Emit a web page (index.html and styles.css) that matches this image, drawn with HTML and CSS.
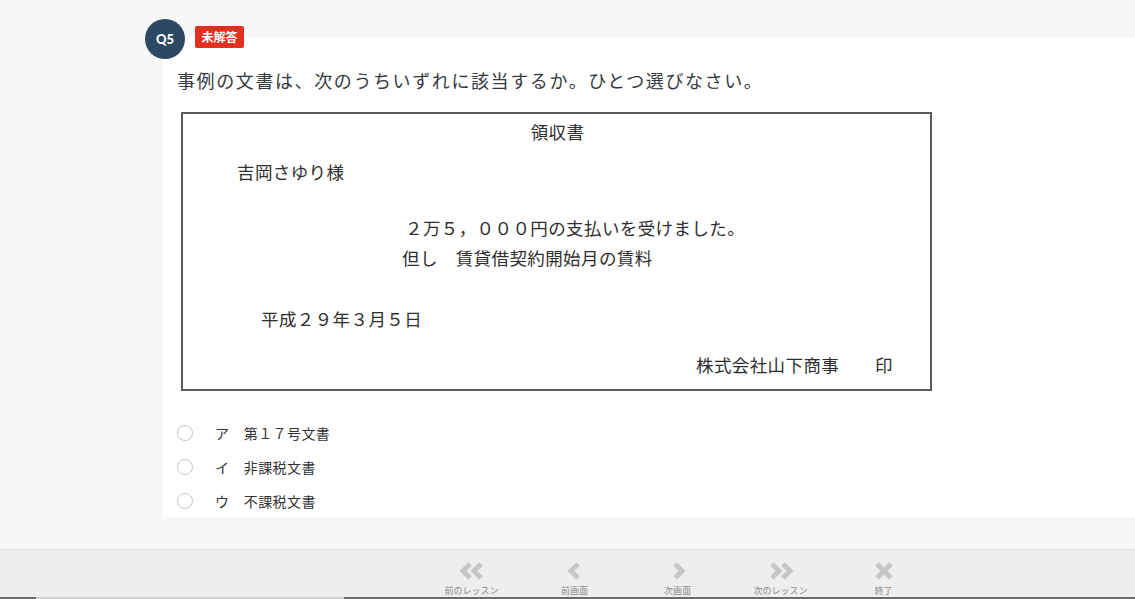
FILE: index.html
```html
<!DOCTYPE html>
<html lang="ja">
<head>
<meta charset="utf-8">
<title>Q5</title>
<link rel="stylesheet" href="styles.css">
</head>
<body>
<div class="main">
  <div class="question">
    <div class="q-head">
      <div class="q-num">Q5</div>
      <div class="q-badge">未解答</div>
    </div>
    <div class="card">
      <p class="q-text">事例の文書は、次のうちいずれに該当するか。ひとつ選びなさい。</p>
      <div class="doc">
        <div class="doc-title">領収書</div>
        <div class="doc-to">吉岡さゆり様</div>
        <div class="doc-amount">２万５，０００円の支払いを受けました。</div>
        <div class="doc-note">但し　賃貸借契約開始月の賃料</div>
        <div class="doc-date">平成２９年３月５日</div>
        <div class="doc-from">株式会社山下商事　　印</div>
      </div>
      <ul class="options">
        <li class="option"><span class="radio"></span><span class="opt-text">ア　第１７号文書</span></li>
        <li class="option"><span class="radio"></span><span class="opt-text">イ　非課税文書</span></li>
        <li class="option"><span class="radio"></span><span class="opt-text">ウ　不課税文書</span></li>
      </ul>
    </div>
  </div>
</div>
<div class="footer">
  <nav class="nav">
    <div class="nav-item">
      <svg class="ico" width="28" height="18" viewBox="0 0 28 18"><polyline points="12,2 5,9 12,16" /><polyline points="23,2 16,9 23,16" /></svg>
      <span class="nav-label">前のレッスン</span>
    </div>
    <div class="nav-item">
      <svg class="ico" width="28" height="18" viewBox="0 0 28 18"><polyline points="17,2 10,9 17,16" /></svg>
      <span class="nav-label">前画面</span>
    </div>
    <div class="nav-item">
      <svg class="ico" width="28" height="18" viewBox="0 0 28 18"><polyline points="11,2 18,9 11,16" /></svg>
      <span class="nav-label">次画面</span>
    </div>
    <div class="nav-item">
      <svg class="ico" width="28" height="18" viewBox="0 0 28 18"><polyline points="5,2 12,9 5,16" /><polyline points="16,2 23,9 16,16" /></svg>
      <span class="nav-label">次のレッスン</span>
    </div>
    <div class="nav-item">
      <svg class="ico" width="28" height="18" viewBox="0 0 28 18"><line x1="7" y1="2" x2="21" y2="16" /><line x1="21" y1="2" x2="7" y2="16" /></svg>
      <span class="nav-label">終了</span>
    </div>
  </nav>
  <div class="bottom-bar">
    <span class="seg seg-dark-a"></span>
    <span class="seg seg-light"></span>
    <span class="seg seg-dark-b"></span>
  </div>
</div>
</body>
</html>
```

FILE: styles.css
```css
* { box-sizing: border-box; }
html, body {
  margin: 0;
  padding: 0;
  height: 599px;
  overflow: hidden;
}
body {
  background: #f7f7f7;
  font-family: "Noto Sans CJK JP", "Noto Sans", sans-serif;
  color: #333;
}
.main {
  height: 549px;
  padding-top: 19px;
}
.question {
  margin-left: 145px;
}
.q-head {
  display: flex;
  align-items: flex-start;
  height: 18px;
  gap: 10px;
}
.q-num {
  position: relative;
  z-index: 1;
  width: 40px;
  height: 40px;
  border-radius: 50%;
  background: #2c4863;
  color: #fff;
  font-family: Lato, "Noto Sans", sans-serif;
  font-weight: 900;
  font-size: 13px;
  display: flex;
  align-items: center;
  justify-content: center;
  flex: none;
}
.q-badge {
  margin-top: 7px;
  width: 49px;
  height: 22px;
  background: #e1301f;
  color: #fff;
  font-size: 12px;
  font-weight: 700;
  border-radius: 2px;
  display: flex;
  align-items: center;
  justify-content: center;
  line-height: 1;
}
.card {
  margin-left: 18px;
  background: #fff;
  height: 480px;
  padding: 29px 0 0 14px;
}
.q-text {
  margin: 0;
  font-size: 18px;
  line-height: 28px;
  letter-spacing: 1.6px;
  color: #343a40;
}
.doc {
  margin: 18px 0 0 4px;
  width: 751px;
  height: 279px;
  border: 2px solid #5c5c5c;
  font-size: 17.5px;
  line-height: 24px;
  letter-spacing: 0.4px;
  color: #2e2e2e;
  padding-top: 6px;
}
.doc-title { text-align: center; padding-left: 2px; }
.doc-to { margin-top: 16px; padding-left: 54px; }
.doc-amount { margin-top: 32px; padding-left: 222px; }
.doc-note { margin-top: 6px; padding-left: 219px; }
.doc-date { margin-top: 37px; padding-left: 78px; }
.doc-from { margin-top: 22px; padding-left: 513px; }
.options {
  list-style: none;
  margin: 25px 0 0 0;
  padding: 0;
}
.option {
  display: flex;
  align-items: center;
  height: 34px;
}
.radio {
  width: 16px;
  height: 16px;
  border: 1px solid #c8c8c8;
  border-radius: 50%;
  background: #fff;
  flex: none;
}
.opt-text {
  margin-left: 22px;
  font-size: 14px;
  letter-spacing: 0.4px;
  color: #333;
}
.footer {
  height: 50px;
  border-top: 1px solid #e0e0e0;
  background: #eeeeee;
  display: flex;
  flex-direction: column;
}
.nav {
  flex: 1;
  display: flex;
  padding-left: 420px;
}
.nav-item {
  width: 103px;
  display: flex;
  flex-direction: column;
  align-items: center;
  padding-top: 12px;
}
.ico {
  fill: none;
  stroke: #c6c6c6;
  stroke-width: 5;
  stroke-linecap: butt;
  stroke-linejoin: miter;
}
.nav-label {
  font-size: 9px;
  line-height: 12px;
  color: #8a8a8a;
  margin-top: 5px;
}
.bottom-bar {
  height: 2px;
  display: flex;
}
.seg { display: block; height: 2px; }
.seg-dark-a { width: 36px; background: #6a6a6a; }
.seg-light { width: 308px; background: #cfcfcf; }
.seg-dark-b { flex: 1; background: #6a6a6a; }
```
